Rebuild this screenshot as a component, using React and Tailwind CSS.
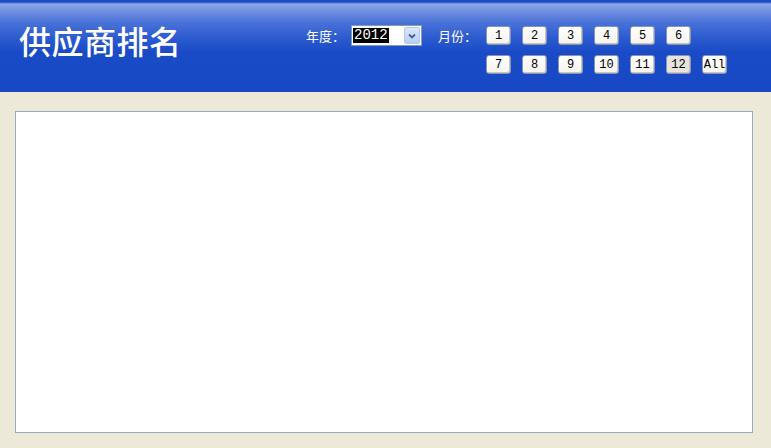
import React, { useState } from 'react';

const months = ['1', '2', '3', '4', '5', '6', '', '7', '8', '9', '10', '11', '12', 'All'];

const MonthButton = ({ label, active, onClick }) => (
    <button
        type="button"
        onClick={onClick}
        className={`w-[25px] h-[19px] rounded-[3px] border border-[#8a93b8] text-[12px] leading-none text-black font-['Liberation_Mono',monospace] shadow-[inset_-1px_-1px_0_#c9c6bb] ${
            active ? 'bg-[#e6e4dc]' : 'bg-[linear-gradient(to_bottom,#ffffff,#f4f3ee)]'
        }`}
    >
        {label}
    </button>
);

const App = () => {
    const [year, setYear] = useState('2012');
    const [month, setMonth] = useState('12');

    return (
        <div className="w-[771px] h-[448px] bg-[#ece9d8] flex flex-col font-['Noto_Sans_CJK_SC',sans-serif]">
            <header className="h-[92px] flex bg-[linear-gradient(to_bottom,#1c4bc7_0px,#1c4bc7_2px,#8ca7e9_4px,#7694e2_10px,#4a72d8_22px,#2c5bd0_38px,#1a4bc6_52px,#1848c4_100%)]">
                <h1 className="w-[306px] pl-[19px] pt-[24px] text-[32px] leading-none font-medium text-white tracking-[0.5px]">
                    供应商排名
                </h1>
                <div className="flex items-start pt-[25px]">
                    <div className="flex items-center h-[21px]">
                        <span className="w-[45px] text-[13px] text-white">年度：</span>
                        <div className="relative w-[71px] h-[21px] bg-white border border-[#7f9db9] flex items-center">
                            <span className="ml-[1px] px-[1px] bg-black text-white text-[14px] leading-[15px] font-['Liberation_Mono',monospace]">
                                {year}
                            </span>
                            <select
                                value={year}
                                onChange={(e) => setYear(e.target.value)}
                                className="absolute inset-0 opacity-0"
                            >
                                {['2010', '2011', '2012'].map((y) => (
                                    <option key={y} value={y}>{y}</option>
                                ))}
                            </select>
                            <span className="ml-auto mr-[1px] w-[16px] h-[17px] rounded-[2px] bg-[linear-gradient(to_bottom,#dbe6fd,#b8cdf8)] border border-[#b6c8ef] flex items-center justify-center pointer-events-none">
                                <svg width="8" height="6" viewBox="0 0 8 6">
                                    <path d="M1 1.5 L4 4.5 L7 1.5" fill="none" stroke="#4d6185" strokeWidth="1.8" />
                                </svg>
                            </span>
                        </div>
                        <span className="ml-[16px] w-[48px] text-[13px] text-white">月份：</span>
                    </div>
                    <div className="grid grid-cols-[repeat(7,25px)] gap-x-[11px] gap-y-[10px] mt-[1px]">
                        {months.map((m, i) =>
                            m ? (
                                <MonthButton key={i} label={m} active={month === m} onClick={() => setMonth(m)} />
                            ) : (
                                <span key={i} />
                            )
                        )}
                    </div>
                </div>
            </header>
            <main className="flex-1 px-[15px] pt-[19px] pb-[15px]">
                <div className="h-[322px] w-[738px] bg-white border border-[#9aa9c0]" />
            </main>
        </div>
    );
};

export default App;
